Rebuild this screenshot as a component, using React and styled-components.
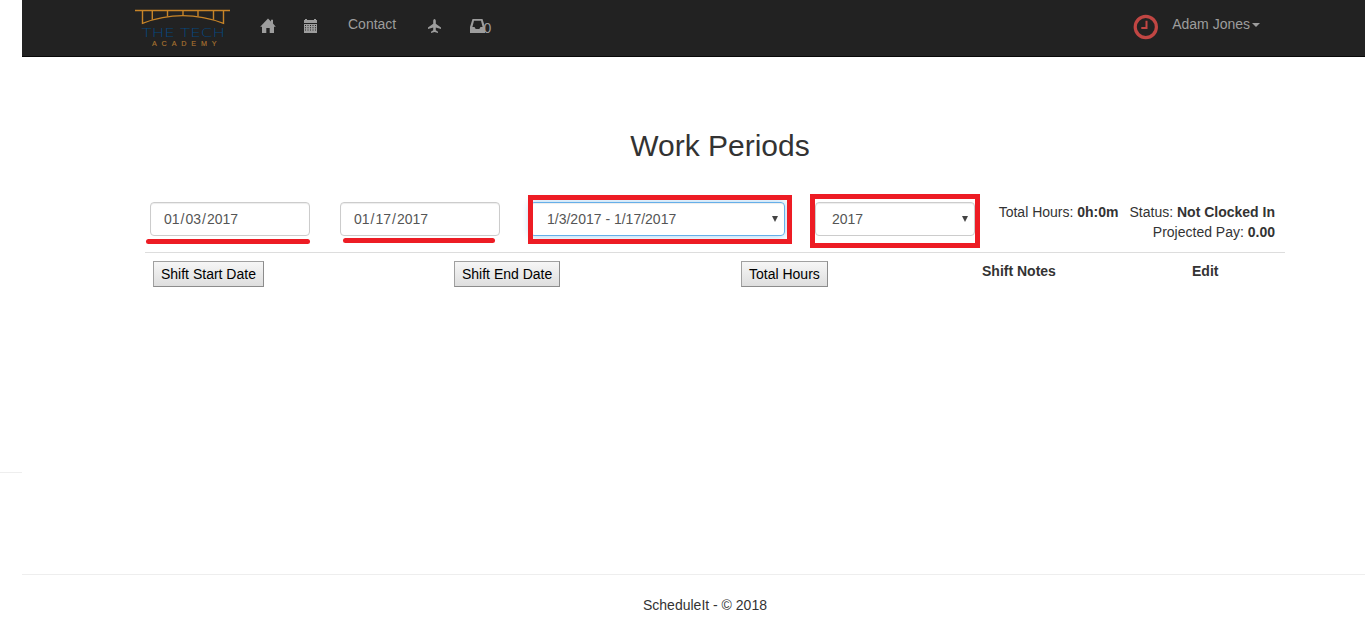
import React from "react";
import styled, { createGlobalStyle, css } from "styled-components";

const GlobalStyle = createGlobalStyle`
  *, *::before, *::after { box-sizing: border-box; }
  body {
    margin: 0;
    background: #fff;
    color: #333;
    font: 14px/20px "Liberation Sans", Arial, sans-serif;
    overflow: hidden;
  }
`;

const Shell = styled.div`
  display: flex;
  height: 623px;
`;

const Gutter = styled.div`
  width: 22px;
  flex: none;
  padding-top: 472px;
`;

const GutterRule = styled.div`
  height: 1px;
  background: #eee;
`;

const Main = styled.div`
  flex: 1;
  min-width: 0;
  display: flex;
  flex-direction: column;
`;

const NavBar = styled.nav`
  display: flex;
  align-items: flex-start;
  height: 57px;
  padding: 0 105px 0 111px;
  background: #222;
  border-bottom: 1px solid #080808;
  color: #9d9d9d;
`;

const Logo = styled.svg`
  width: 100px;
  height: 50px;
  flex: none;
`;

const NavItem = styled.a`
  display: flex;
  align-items: flex-start;
  margin-left: ${(p) => p.$gap}px;
  padding-top: ${(p) => p.$top || 14}px;
  color: inherit;
  text-decoration: none;
`;

const Glyph = styled.svg`
  display: block;
  flex: none;
  width: ${(p) => p.$size || 15}px;
  height: ${(p) => p.$size || 15}px;
  fill: currentColor;
`;

const Count = styled.span`
  margin-left: -1.5px;
`;

const NavRight = styled.div`
  display: flex;
  margin-left: auto;
`;

const ClockIcon = styled.svg`
  width: 26px;
  height: 26px;
  margin: 14px 13px 0 0;
  fill: none;
  stroke: #c14643;
`;

const Caret = styled.span`
  margin: 9px 0 0 2px;
  border-top: 4px solid currentColor;
  border-left: 4px solid transparent;
  border-right: 4px solid transparent;
`;

const Content = styled.main`
  flex: 1;
  padding: 72px 80px 0 123px;
`;

const Title = styled.h2`
  margin: 0 0 40px;
  padding-left: 10px;
  font-size: 30px;
  line-height: 33px;
  font-weight: 400;
  text-align: center;
`;

const Filters = styled.div`
  display: flex;
  align-items: flex-start;
  height: 50px;
  padding: 0 10px 0 5px;
`;

const Field = styled.div`
  position: relative;
  flex: none;
  width: ${(p) => p.$width}px;
  margin-right: ${(p) => (p.$last ? 0 : 30)}px;
`;

const Control = styled.div`
  display: flex;
  align-items: center;
  justify-content: space-between;
  height: 34px;
  padding: 0 ${(p) => (p.$select ? "6px 0 16px" : "12px")};
  border: 1px solid #ccc;
  border-radius: 4px;
  box-shadow: inset 0 1px 1px rgba(0, 0, 0, 0.075);
  color: #555;
  ${(p) =>
    p.$focused &&
    css`
      border-color: #66afe9;
      box-shadow: inset 0 1px 1px rgba(0, 0, 0, 0.075), 0 0 8px rgba(102, 175, 233, 0.6);
    `}
`;

const DatePart = styled.span`
  padding: 0 1px;
`;

const Arrow = styled.span`
  width: 6px;
  height: 6px;
  background: #444;
  clip-path: polygon(0 0, 100% 0, 50% 100%);
`;

const Underline = styled.span`
  position: absolute;
  left: ${(p) => p.$left}px;
  top: ${(p) => p.$top}px;
  width: ${(p) => p.$width}px;
  height: 5px;
  border-radius: 2.5px;
  background: #ed1c24;
`;

const Frame = styled.span`
  position: absolute;
  left: ${(p) => p.$left}px;
  top: ${(p) => p.$top}px;
  width: ${(p) => p.$width}px;
  height: ${(p) => p.$height}px;
  border: 5px solid #ed1c24;
`;

const Summary = styled.div`
  margin-left: auto;
  text-align: right;
  white-space: nowrap;
`;

const Status = styled.span`
  margin-left: 11px;
`;

const HeaderRow = styled.div`
  display: grid;
  grid-template-columns: 301px 287px 241px 210px 1fr;
  align-items: start;
  padding: 8px 0 0 8px;
  border-top: 1px solid #ddd;
  font-weight: 700;
`;

const SortButton = styled.button`
  justify-self: start;
  height: 26px;
  padding: 0 7px;
  border: 1px solid #a0a0a0;
  border-right-color: #8c8c8c;
  border-bottom-color: #8c8c8c;
  border-radius: 0;
  background: linear-gradient(#f6f6f6, #dedede);
  color: #000;
  font: 14px/20px "Liberation Sans", Arial, sans-serif;
`;

const Footer = styled.footer`
  height: 49px;
  padding: 20px 0 0 23px;
  border-top: 1px solid #eee;
`;

const FooterText = styled.p`
  margin: 0 0 0 598px;
`;

function BridgeLogo() {
  return (
    <Logo viewBox="0 0 100 50">
      <g fill="none" stroke="#c78428" strokeWidth="1.4">
        <path d="M2 10.5H97" strokeWidth="1.7" />
        <path d="M9.5 10.5V23.3Q49.5 8 90.5 23.3V10.5" />
        <path d="M19.3 10.5V19.8M34.5 10.5V16.6M50 10.5V15.5M65 10.5V16.6M80.5 10.5V19.8" />
      </g>
      <text x="8.5" y="37" fill="#06477d" fontFamily="DejaVu Sans" fontWeight="200" fontSize="13" textLength="83.5" lengthAdjust="spacingAndGlyphs">
        THE TECH
      </text>
      <text x="19" y="46.3" fill="#a87230" stroke="#a87230" strokeWidth="0.15" fontFamily="Liberation Sans" fontSize="7.2" textLength="64.5">
        ACADEMY
      </text>
    </Logo>
  );
}

function DateField({ value, children }) {
  const parts = value.split("/");
  return (
    <Field $width={160}>
      <Control>
        <span>
          {parts.map((part, i) => (
            <React.Fragment key={i}>
              {i > 0 && "/"}
              <DatePart>{part}</DatePart>
            </React.Fragment>
          ))}
        </span>
      </Control>
      {children}
    </Field>
  );
}

export default function App() {
  return (
    <>
      <GlobalStyle />
      <Shell>
        <Gutter>
          <GutterRule />
        </Gutter>
        <Main>
          <NavBar>
            <BridgeLogo />
            <NavItem $gap={27} $top={18}>
              <Glyph $size={16} viewBox="0 0 16 16">
                <path d="M8 .5 11 3.5V1.8h2v3.7L15.8 8.7H14V15H9.7V10H6.3v5H2V8.7H.2Z" />
              </Glyph>
            </NavItem>
            <NavItem $gap={27} $top={18}>
              <Glyph viewBox="0 0 15 15">
                <path fillRule="evenodd" d="M1 2h1V1h2v1h7V1h2v1h1v3H1ZM1 6h13v9H1ZM2 7v1h1V7Zm2.5 0v1h1V7ZM7 7v1h1V7Zm2.5 0v1h1V7ZM12 7v1h1V7ZM2 9.2v1h1v-1Zm2.5 0v1h1v-1Zm2.5 0v1h1v-1Zm2.5 0v1h1v-1Zm2.5 0v1h1v-1ZM2 11.4v1h1v-1Zm2.5 0v1h1v-1Zm2.5 0v1h1v-1Zm2.5 0v1h1v-1Zm2.5 0v1h1v-1Z" />
              </Glyph>
            </NavItem>
            <NavItem $gap={30}>Contact</NavItem>
            <NavItem $gap={30.3} $top={18}>
              <Glyph viewBox="0 0 15 15">
                <path d="M7.5 1C8.3 1 8.8 2 8.8 3.2V5.8L14 9.6V11L8.8 9.4V12.3L11 13.8V15L7.5 14.1 4 15V13.8L6.2 12.3V9.4L1 11V9.6L6.2 5.8V3.2C6.2 2 6.7 1 7.5 1Z" />
              </Glyph>
            </NavItem>
            <NavItem $gap={28.5} $top={18}>
              <Glyph viewBox="0 0 15 15">
                <path fillRule="evenodd" d="M2.5 1h10L15 9v6H0V9ZM4 2.8 2.4 9H4.5L5.7 11h3.6L10.5 9h2.1L11 2.8Z" />
              </Glyph>
              <Count>0</Count>
            </NavItem>
            <NavRight>
              <ClockIcon viewBox="0 0 26 26">
                <circle cx="12.8" cy="13" r="10.6" strokeWidth="3.2" />
                <path d="M13.5 6.8V14H8.3" strokeWidth="2" />
              </ClockIcon>
              <NavItem $gap={0}>
                Adam Jones
                <Caret />
              </NavItem>
            </NavRight>
          </NavBar>
          <Content>
            <Title>Work Periods</Title>
            <Filters>
              <DateField value="01/03/2017">
                <Underline $left={-4} $top={37} $width={164} />
              </DateField>
              <DateField value="01/17/2017">
                <Underline $left={3} $top={36} $width={152} />
              </DateField>
              <Field $width={255}>
                <Control $select $focused>
                  1/3/2017 - 1/17/2017
                  <Arrow />
                </Control>
                <Frame $left={-2} $top={-7} $width={264} $height={49} />
              </Field>
              <Field $width={160} $last>
                <Control $select>
                  2017
                  <Arrow />
                </Control>
                <Frame $left={-5} $top={-8} $width={170} $height={54} />
              </Field>
              <Summary>
                <div>
                  Total Hours: <b>0h:0m</b>
                  <Status>
                    Status: <b>Not Clocked In</b>
                  </Status>
                </div>
                <div>
                  Projected Pay: <b>0.00</b>
                </div>
              </Summary>
            </Filters>
            <HeaderRow>
              <SortButton>Shift Start Date</SortButton>
              <SortButton>Shift End Date</SortButton>
              <SortButton>Total Hours</SortButton>
              <span>Shift Notes</span>
              <span>Edit</span>
            </HeaderRow>
          </Content>
          <Footer>
            <FooterText>ScheduleIt - © 2018</FooterText>
          </Footer>
        </Main>
      </Shell>
    </>
  );
}
